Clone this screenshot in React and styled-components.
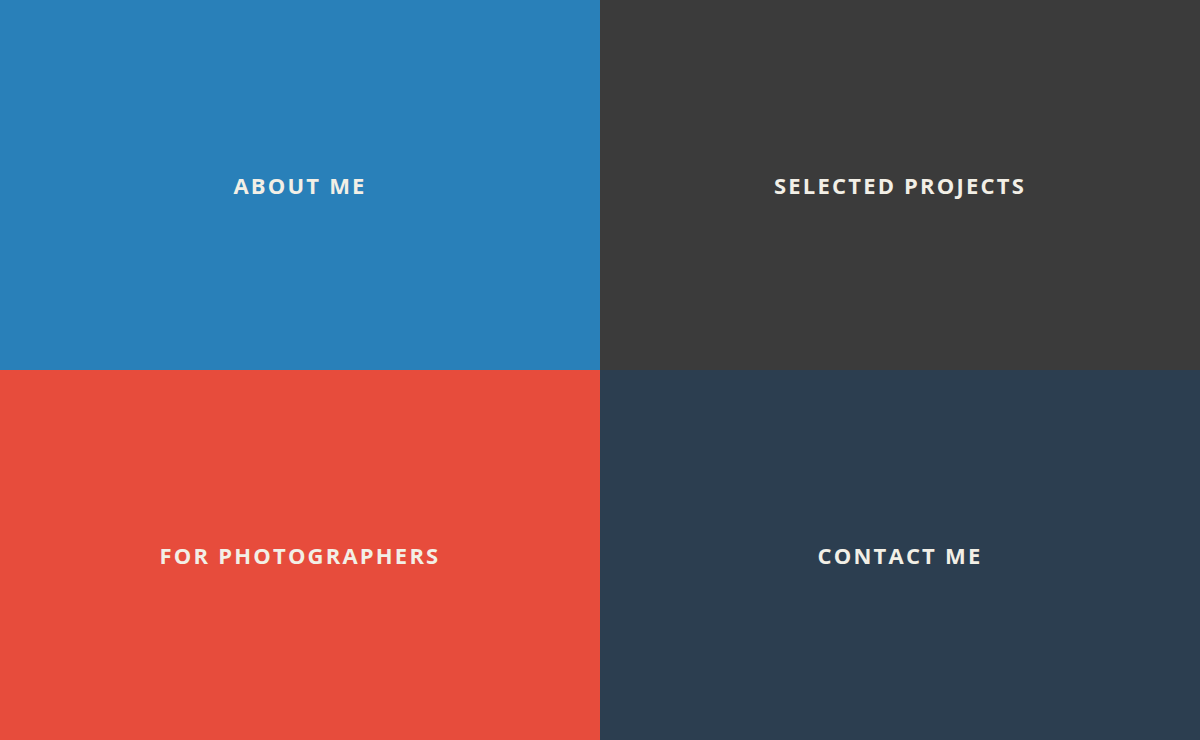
import React from 'react';
import styled, { createGlobalStyle } from 'styled-components';

const GlobalStyle = createGlobalStyle`
  html, body {
    margin: 0;
    padding: 0;
    height: 100%;
    overflow: hidden;
  }
`;

const Grid = styled.main`
  display: grid;
  grid-template-columns: 1fr 1fr;
  grid-template-rows: 1fr 1fr;
  width: 100vw;
  height: 100vh;
`;

const Tile = styled.a`
  display: flex;
  align-items: center;
  justify-content: center;
  background-color: ${(p) => p.$bg};
  color: #f2efe6;
  text-decoration: none;
  font-family: 'Open Sans', 'Noto Sans', sans-serif;
  font-weight: 700;
  font-size: 22px;
  letter-spacing: 2.2px;
  text-transform: uppercase;
`;

const tiles = [
  { label: 'About me', bg: '#2980b9' },
  { label: 'Selected projects', bg: '#3b3b3b' },
  { label: 'For photographers', bg: '#e74c3c' },
  { label: 'Contact me', bg: '#2c3e50' },
];

const App = () => (
  <>
    <GlobalStyle />
    <Grid>
      {tiles.map((t) => (
        <Tile key={t.label} href="#" $bg={t.bg}>
          {t.label}
        </Tile>
      ))}
    </Grid>
  </>
);

export default App;
